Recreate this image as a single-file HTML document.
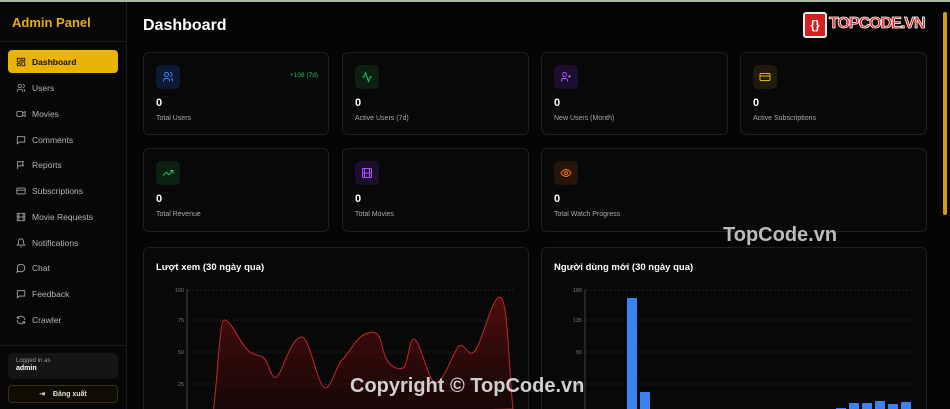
<!DOCTYPE html>
<html style="width:950px;height:409px;overflow:hidden"><head><meta charset="utf-8"><style>
*{box-sizing:border-box;margin:0;padding:0}
body{width:950px;height:409px;overflow:hidden;background:#050505;font-family:"Liberation Sans","Noto Sans CJK SC",sans-serif;color:#fff;position:relative}
.top{position:absolute;left:0;top:0;width:950px;height:2px;background:#a9b8a3}
.side{position:absolute;left:0;top:2px;width:127px;height:407px;background:#070707;border-right:1px solid #1c1c1c}
.brand{position:absolute;left:12px;top:13px;color:#e8ad12;font-weight:bold;font-size:13px}
.hr{position:absolute;left:0;width:126px;height:1px;background:#1c1c1c}
.nav{position:absolute;left:8px;width:110px;height:23px;font-size:8.5px;color:#b5b5b5;display:flex;align-items:center;padding-left:8px;border-radius:4px}
.nav svg{width:10px;height:10px;margin-right:6px;stroke:#aaa;fill:none;stroke-width:2}
.nav.act{background:#eab308;color:#111;font-weight:bold}
.nav.act svg{stroke:#111}
h1{position:absolute;left:143px;top:17px;font-size:16px;font-weight:bold}
.card{position:absolute;background:#080808;border:1px solid #1e1e1e;border-radius:6px;overflow:hidden}
.ib{position:absolute;left:12px;top:12px;width:24px;height:24px;border-radius:5px;display:flex;align-items:center;justify-content:center}
.ib svg{width:12px;height:12px;fill:none;stroke-width:2}
.num{position:absolute;left:12px;top:44px;font-size:11px;font-weight:bold}
.lbl{position:absolute;left:12px;top:62px;font-size:7px;color:#aaa}
.ct{position:absolute;left:12px;top:14px;font-size:9.5px;font-weight:bold}
.wm{position:absolute;font-weight:bold;color:#cfcfcf;font-size:20px}
</style></head><body>
<div class="top"></div>
<div class="side">
<div class="brand">Admin Panel</div>
<div class="hr" style="top:39px"></div>
<div class="nav act" style="top:48px"><svg viewBox="0 0 24 24"><rect x="3" y="3" width="7" height="9"/><rect x="14" y="3" width="7" height="5"/><rect x="14" y="12" width="7" height="9"/><rect x="3" y="16" width="7" height="5"/></svg>Dashboard</div>
<div class="nav" style="top:74px"><svg viewBox="0 0 24 24"><circle cx="9" cy="7" r="4"/><path d="M3 21v-2a4 4 0 0 1 4-4h4a4 4 0 0 1 4 4v2M16 3a4 4 0 0 1 0 8M21 21v-2a4 4 0 0 0-3-4"/></svg>Users</div>
<div class="nav" style="top:100px"><svg viewBox="0 0 24 24"><rect x="2" y="6" width="14" height="12" rx="2"/><path d="M16 10l6-4v12l-6-4"/></svg>Movies</div>
<div class="nav" style="top:126px"><svg viewBox="0 0 24 24"><path d="M3 4h18v13H8l-5 4z"/></svg>Comments</div>
<div class="nav" style="top:151px"><svg viewBox="0 0 24 24"><path d="M4 22V4h14l-3 5 3 5H4"/></svg>Reports</div>
<div class="nav" style="top:177px"><svg viewBox="0 0 24 24"><rect x="2" y="5" width="20" height="14" rx="2"/><path d="M2 10h20"/></svg>Subscriptions</div>
<div class="nav" style="top:203px"><svg viewBox="0 0 24 24"><rect x="3" y="3" width="18" height="18" rx="2"/><path d="M7 3v18M17 3v18M3 12h18"/></svg>Movie Requests</div>
<div class="nav" style="top:229px"><svg viewBox="0 0 24 24"><path d="M6 8a6 6 0 0 1 12 0c0 7 3 9 3 9H3s3-2 3-9M10 21h4"/></svg>Notifications</div>
<div class="nav" style="top:254px"><svg viewBox="0 0 24 24"><path d="M7.9 20A9 9 0 1 0 4 16.1L2 22z"/></svg>Chat</div>
<div class="nav" style="top:280px"><svg viewBox="0 0 24 24"><path d="M3 4h18v13H8l-5 4z"/></svg>Feedback</div>
<div class="nav" style="top:306px"><svg viewBox="0 0 24 24"><path d="M21 12a9 9 0 0 0-15-6.7L3 8M3 3v5h5M3 12a9 9 0 0 0 15 6.7L21 16M21 21v-5h-5"/></svg>Crawler</div>
<div class="hr" style="top:343px"></div>
<div style="position:absolute;left:8px;top:351px;width:110px;height:26px;background:#151515;border-radius:5px;padding:5px 8px;font-size:6px;color:#999">Logged in as<div style="color:#fff;font-weight:bold;font-size:7px;margin-top:1px">admin</div></div>
<div style="position:absolute;left:8px;top:383px;width:110px;height:18px;background:#100d04;border:1px solid #3a3010;border-radius:4px;font-size:7px;font-weight:bold;color:#ddd;display:flex;align-items:center;justify-content:center">⇥&nbsp;&nbsp;&nbsp;&nbsp;Đăng xuất</div>
</div>
<h1>Dashboard</h1>

<div class="card" style="left:143px;top:52px;width:186px;height:83px"><div class="ib" style="background:#0d1a33"><svg viewBox="0 0 24 24" stroke="#3b82f6"><circle cx="9" cy="7" r="4"/><path d="M3 21v-2a4 4 0 0 1 4-4h4a4 4 0 0 1 4 4v2M16 3a4 4 0 0 1 0 8M21 21v-2a4 4 0 0 0-3-4"/></svg></div><div style="position:absolute;right:10px;top:19px;font-size:6.5px;color:#22c55e">+106 (7d)</div><div class="num">0</div><div class="lbl">Total Users</div></div>
<div class="card" style="left:342px;top:52px;width:187px;height:83px"><div class="ib" style="background:#0c2012"><svg viewBox="0 0 24 24" stroke="#22c55e"><path d="M22 12h-4l-3 9L9 3l-3 9H2"/></svg></div><div class="num">0</div><div class="lbl">Active Users (7d)</div></div>
<div class="card" style="left:541px;top:52px;width:187px;height:83px"><div class="ib" style="background:#1d0e2e"><svg viewBox="0 0 24 24" stroke="#a855f7"><circle cx="9" cy="7" r="4"/><path d="M3 21v-2a4 4 0 0 1 4-4h4a4 4 0 0 1 4 4v2M19 8v6M22 11h-6"/></svg></div><div class="num">0</div><div class="lbl">New Users (Month)</div></div>
<div class="card" style="left:740px;top:52px;width:187px;height:83px"><div class="ib" style="background:#21190a"><svg viewBox="0 0 24 24" stroke="#eab308"><rect x="2" y="5" width="20" height="14" rx="2"/><path d="M2 10h20"/></svg></div><div class="num">0</div><div class="lbl">Active Subscriptions</div></div>

<div class="card" style="left:143px;top:148px;width:186px;height:84px"><div class="ib" style="background:#0c2012"><svg viewBox="0 0 24 24" stroke="#22c55e"><path d="M22 7l-8.5 8.5-5-5L2 17M16 7h6v6"/></svg></div><div class="num">0</div><div class="lbl">Total Revenue</div></div>
<div class="card" style="left:342px;top:148px;width:187px;height:84px"><div class="ib" style="background:#1d0e2e"><svg viewBox="0 0 24 24" stroke="#a855f7"><rect x="3" y="3" width="18" height="18" rx="2"/><path d="M7 3v18M17 3v18M3 12h18"/></svg></div><div class="num">0</div><div class="lbl">Total Movies</div></div>
<div class="card" style="left:541px;top:148px;width:386px;height:84px"><div class="ib" style="background:#24140a"><svg viewBox="0 0 24 24" stroke="#f97316"><path d="M2 12s4-7 10-7 10 7 10 7-4 7-10 7S2 12 2 12z"/><circle cx="12" cy="12" r="3"/></svg></div><div class="num">0</div><div class="lbl">Total Watch Progress</div></div>

<div class="card" style="left:143px;top:247px;width:386px;height:175px"><div class="ct">Lượt xem (30 ngày qua)</div></div>
<div class="card" style="left:541px;top:247px;width:386px;height:175px"><div class="ct">Người dùng mới (30 ngày qua)</div></div>

<svg style="position:absolute;left:0;top:0" width="950" height="409">
<defs><linearGradient id="g" x1="0" y1="0" x2="0" y2="1"><stop offset="0" stop-color="#7f1010" stop-opacity=".6"/><stop offset="1" stop-color="#3a0505" stop-opacity=".3"/></linearGradient></defs>
<g stroke="#222" stroke-dasharray="2 2" stroke-width="1">
<line x1="188" y1="290" x2="515" y2="290"/><line x1="188" y1="320" x2="515" y2="320"/><line x1="188" y1="352" x2="515" y2="352"/><line x1="188" y1="384" x2="515" y2="384"/>
<line x1="586" y1="290" x2="913" y2="290"/><line x1="586" y1="320" x2="913" y2="320"/><line x1="586" y1="352" x2="913" y2="352"/><line x1="586" y1="384" x2="913" y2="384"/>
</g>
<line x1="187" y1="289" x2="187" y2="409" stroke="#444"/>
<line x1="585" y1="289" x2="585" y2="409" stroke="#444"/>
<g font-size="5.5" fill="#777" text-anchor="end" font-family="Liberation Sans">
<text x="184" y="292">100</text><text x="184" y="322">75</text><text x="184" y="354">50</text><text x="184" y="386">25</text>
<text x="582" y="292">180</text><text x="582" y="322">135</text><text x="582" y="354">90</text><text x="582" y="386">45</text>
</g>
<path d="M213 416C218 370 220 320 224 320C232 320 240 345 250 352C258 358 263 352 268 365C272 376 275 385 282 368C290 348 295 337 302 337C310 337 318 390 326 388C332 386 336 366 342 360C350 352 356 338 365 334C372 332 378 328 382 345C386 368 398 370 403 368C408 366 409 338 414 339C420 340 428 380 435 383C442 385 450 360 458 347C464 340 468 358 474 352C482 344 492 296 500 297C508 298 508 360 513 409L513 409L213 416Z" fill="url(#g)" stroke="#c0282b" stroke-width="1"/>
<g fill="#3b82f6">
<rect x="627" y="298" width="10" height="120" rx="1"/><rect x="640" y="392" width="10" height="30" rx="1"/>
<rect x="836" y="408" width="10" height="10"/><rect x="849" y="403" width="10" height="10" rx="1"/><rect x="862" y="403" width="10" height="10" rx="1"/><rect x="875" y="401" width="10" height="10" rx="1"/><rect x="888" y="404" width="10" height="10" rx="1"/><rect x="901" y="402" width="10" height="10" rx="1"/>
</g>
<rect x="943" y="12" width="4" height="203" rx="2" fill="#d69e15"/>
</svg>
<div style="position:absolute;left:803px;top:12px;width:24px;height:26px;background:#d42020;border:2px solid #eee;border-radius:3px;color:#fff;font-weight:bold;font-size:12px;text-align:center;line-height:22px">{}</div>
<div style="position:absolute;left:829px;top:15px;font-weight:bold;font-size:16px;color:#e02020;letter-spacing:-1px;-webkit-text-stroke:0.8px #fff">TOPCODE.VN</div>
<div class="wm" style="left:723px;top:224px;color:#bbb">TopCode.vn</div>
<div class="wm" style="left:350px;top:375px">Copyright © TopCode.vn</div>
</body></html>
